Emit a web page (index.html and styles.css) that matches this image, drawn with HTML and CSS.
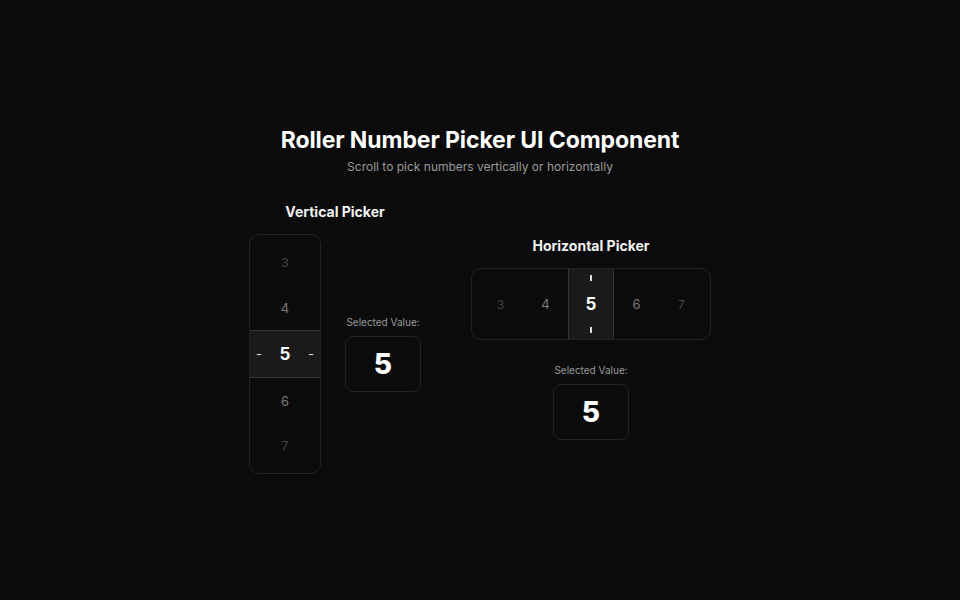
FILE: index.html
```html
<!DOCTYPE html>
<html lang="en">
<head>
    <meta charset="UTF-8">
    <title>Roller Number Picker</title>
    <link rel="stylesheet" href="styles.css">
</head>
<body>

<div class="page">
    <h1>Roller Number Picker UI Component</h1>
    <p class="subtitle">Scroll to pick numbers vertically or horizontally</p>

    <div class="pickers">
        <div class="section">
            <h2>Vertical Picker</h2>
            <div class="vertical-row">
                <div class="roller vertical">
                    <div class="item far">3</div>
                    <div class="item near">4</div>
                    <div class="item selected">
                        <span class="dash">-</span>
                        <span>5</span>
                        <span class="dash">-</span>
                    </div>
                    <div class="item near">6</div>
                    <div class="item far">7</div>
                </div>
                <div class="value">
                    <div class="value-label">Selected Value:</div>
                    <div class="value-box">5</div>
                </div>
            </div>
        </div>

        <div class="section">
            <h2>Horizontal Picker</h2>
            <div class="roller horizontal">
                <div class="item far">3</div>
                <div class="item near">4</div>
                <div class="item selected">
                    <span class="tick"></span>
                    <span>5</span>
                    <span class="tick"></span>
                </div>
                <div class="item near">6</div>
                <div class="item far">7</div>
            </div>
            <div class="value">
                <div class="value-label">Selected Value:</div>
                <div class="value-box">5</div>
            </div>
        </div>
    </div>
</div>

</body>
</html>
```

FILE: styles.css
```css
body {
    margin: 0;
    padding: 0;
    background-color: #0b0b0b;
    color: #ffffff;
    font-family: Inter, 'Noto Sans', sans-serif;
    min-height: 100vh;
    display: flex;
    justify-content: center;
    align-items: center;
}

.page {
    display: flex;
    flex-direction: column;
    align-items: center;
}

h1 {
    font-size: 23px;
    font-weight: 700;
    margin: 0;
    letter-spacing: -0.1px;
}

.subtitle {
    font-size: 12px;
    color: #9a9a9a;
    margin: 5px 0 29px;
}

.pickers {
    display: flex;
    align-items: center;
    gap: 50px;
}

.section {
    display: flex;
    flex-direction: column;
    align-items: center;
}

h2 {
    font-size: 14px;
    font-weight: 700;
    margin: 0 0 14px;
    color: #f2f2f2;
}

.vertical-row {
    display: flex;
    align-items: center;
    gap: 24px;
}

.roller {
    border: 1px solid #222;
    border-radius: 10px;
    display: flex;
    overflow: hidden;
}

.roller.vertical {
    flex-direction: column;
    width: 70px;
    padding: 5px 0;
}

.roller.vertical .item {
    height: 45px;
}

.roller.horizontal {
    width: 238px;
    height: 70px;
}

.roller.horizontal .item {
    width: 45px;
    flex-direction: column;
}

.item {
    display: flex;
    justify-content: center;
    align-items: center;
    font-size: 13px;
}

.item.far {
    color: #444;
    font-size: 12px;
}

.item.near {
    color: #7a7a7a;
}

.item.selected {
    background: #1a1a1a;
    font-size: 17px;
    font-weight: 700;
    color: #fff;
}

.vertical .item.selected {
    height: 46px;
    border-top: 1px solid #333;
    border-bottom: 1px solid #333;
    justify-content: space-between;
    padding: 0 6px;
}

.horizontal .item.selected {
    box-sizing: border-box;
    width: 46px;
    border-left: 1px solid #333;
    border-right: 1px solid #333;
    justify-content: space-between;
    padding: 6px 0;
}

.horizontal .item.far:first-child {
    margin-left: 6px;
}

.dash {
    font-size: 13px;
    font-weight: 400;
    color: #ddd;
}

.tick {
    width: 2px;
    height: 6px;
    background: #ddd;
}

.value {
    display: flex;
    flex-direction: column;
    align-items: center;
}

.section > .value {
    margin-top: 24px;
}

.value-label {
    font-size: 10px;
    color: #999;
    margin-bottom: 8px;
}

.value-box {
    width: 74px;
    height: 54px;
    border: 1px solid #222;
    border-radius: 8px;
    display: flex;
    justify-content: center;
    align-items: center;
    font-size: 28px;
    font-weight: 800;
}
```
